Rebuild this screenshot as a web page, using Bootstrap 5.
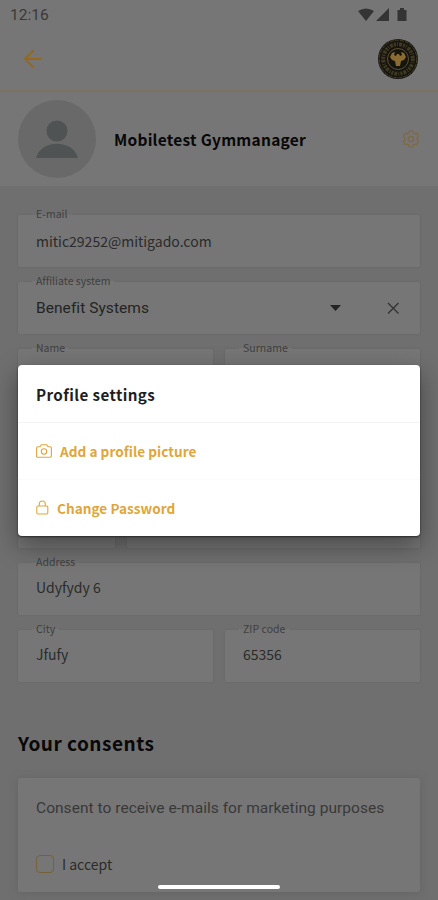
<!DOCTYPE html>
<html lang="en">
<head>
<meta charset="utf-8">
<meta name="viewport" content="width=device-width, initial-scale=1">
<title>Profile settings</title>
<link href="https://cdn.jsdelivr.net/npm/bootstrap@5.3.0/dist/css/bootstrap.min.css" rel="stylesheet">
<style>
body{background:#6f6f6f;color:#2b2b2b;font-family:"Noto Sans CJK SC",sans-serif;font-size:14px;line-height:20px}
.screen{width:438px;height:900px}
.robo{font-family:Roboto,sans-serif}
.surface{background:#767676}
.status{height:28px;padding:2px 31px 0 10px;font-size:15.5px;color:#393939}
.topbar{height:62px;padding:0 20px 0 23px}
.rule{height:2px;background:#7c715c}
.profile{height:94px;padding:0 18px}
.avatar{width:78px;height:78px;background:#696969}
.user-name{font-size:15.5px;font-weight:700;color:#080808;letter-spacing:.25px;padding-left:18px}
.form-area{padding:29px 18px 0}
.field{height:52px;background:#767676;border-radius:2px;padding:0 18px;box-shadow:0 0 2px #656565}
.field-label{left:14px;top:-10px;padding:0 4px;font-family:"Noto Sans CJK SC",sans-serif;font-size:10.5px;line-height:18px;color:#404040;letter-spacing:.03px}
.field-label::before{content:"";position:absolute;z-index:-1;inset:5px 0 4px;background:linear-gradient(#6f6f6f 50%,#767676 50%)}
.g-row{margin-bottom:15px}
.gap-field{gap:12px}
.short-field{width:97px}
.row-break{margin-bottom:28px}
.select-value{font-size:15.5px;color:#242424;letter-spacing:.06px}
.consent-title{font-size:19px;line-height:28px;font-weight:700;color:#080808;letter-spacing:.5px;margin:47px 0 21px}
.consent-box{height:114px;box-shadow:0 1px 8px #646464;border-radius:2px}
.consent-text{height:60px;font-size:15.5px;color:#393939;letter-spacing:.04px}
.inset-x{padding-left:18px;padding-right:18px}
.tick{width:18px;height:18px;border:1px solid #76623b;border-radius:4px}
.dialog-card{left:18px;top:365px;width:402px;height:171px;background:#fff;border-radius:4px;box-shadow:0 1px 2px #292929,0 9px 26px rgba(0,0,0,.4)}
.dialog-title{height:58px;font-size:15.2px;font-weight:700;color:#1e1e1e;border-bottom:1px solid #f3f3f3;letter-spacing:.4px}
.action{height:56px;color:#dfa63b;font-weight:700;font-size:13.6px;letter-spacing:.03px;text-decoration:none}
.action:hover{color:#b98220}
.action + .action{border-top:1px solid #fbfbfb}
.home-bar{left:158px;top:885px;width:122px;height:4px;background:#fff}
</style>
</head>
<body>
<div class="screen position-relative overflow-hidden">
<header class="surface">
  <div class="status robo d-flex align-items-center justify-content-between">
    <span>12:16</span>
    <svg width="50" height="16" viewBox="0 0 50 16" fill="#343434"><path d="M1 4Q9-1 17 4L9 14Z"/><path d="M19 14L32 1V14Z"/><path d="M40.500 3h2.500V1h4v2h2.500v11h-9Z"/></svg>
  </div>
  <div class="topbar d-flex align-items-center justify-content-between">
    <svg width="20" height="20" viewBox="0 0 20 20" fill="none" stroke="#936820" stroke-width="1.800"><path d="M10.500 1.500L2 10l8.500 8.500M2 10h16.500"/></svg>
    <svg width="40" height="40" viewBox="0 0 40 40"><circle cx="20" cy="20" r="20" fill="#15140e"/><g fill="none" stroke="#5b5031"><circle cx="20" cy="20" r="18.800" stroke-width=".7" stroke-dasharray="4 1"/><circle cx="20" cy="20" r="14.800" stroke-width="4" stroke-dasharray="2 1.100 1 1.200 3 1" opacity=".6"/><circle cx="20" cy="20" r="10.500" stroke-width="1"/></g><path d="M14 14l3-1-1 3 2 1 1-2h2l1 2 2-1-1-3 3 1 2 4-2 3-3 1-1 5h-4l-1-5-3-1-2-3Z" fill="#8c6b32"/></svg>
  </div>
</header>
<div class="rule"></div>
<section class="profile surface d-flex align-items-center">
  <div class="avatar rounded-circle flex-shrink-0 d-flex align-items-center justify-content-center"><svg width="42" height="40" viewBox="0 0 42 40" fill="#505353"><circle cx="21" cy="12" r="10.500"/><path d="M0 39C5 20 37 20 42 39Z"/></svg></div>
  <div class="user-name flex-grow-1">Mobiletest Gymmanager</div>
  <svg width="18" height="18" viewBox="0 0 18 18" fill="none" stroke="#80683f" stroke-width="1.200"><path d="M7.300 1h3.400l.6 2 1.500.9 2.100-.6 1.700 3L15.100 8v2l1.500 1.600-1.700 3-2.100-.5-1.500.9-.6 2H7.300l-.6-2-1.500-.9-2.100.5-1.700-3L2.900 10V8L1.400 6.300l1.700-3 2.100.6L6.700 3Z"/><circle cx="9" cy="9" r="2.700"/></svg>
</section>
<main class="form-area">
  <div class="field g-row position-relative d-flex align-items-center"><span class="field-label position-absolute z-1">E-mail</span>mitic29252@mitigado.com</div>
  <div class="field g-row position-relative d-flex align-items-center"><span class="field-label position-absolute z-1">Affiliate system</span><span class="select-value robo flex-grow-1">Benefit Systems</span>
    <svg width="72" height="14" viewBox="0 0 72 14"><path d="M0 4h11L5.500 10Z" fill="#242424"/><path d="M58 2l10.500 10.500M68.500 2L58 12.500" stroke="#343434" stroke-width="1.400"/></svg></div>
  <div class="g-row d-flex gap-field"><div class="field position-relative w-50"><span class="field-label position-absolute z-1">Name</span></div><div class="field position-relative w-50"><span class="field-label position-absolute z-1">Surname</span></div></div>
  <div class="field row-break"></div>
  <div class="g-row d-flex gap-field"><div class="field short-field"></div><div class="field flex-grow-1"></div></div>
  <div class="field g-row position-relative d-flex align-items-center pb-1"><span class="field-label position-absolute z-1">Address</span>Udyfydy 6</div>
  <div class="d-flex gap-field"><div class="field position-relative w-50 d-flex align-items-center pb-1"><span class="field-label position-absolute z-1">City</span>Jfufy</div><div class="field position-relative w-50 d-flex align-items-center pb-1"><span class="field-label position-absolute z-1">ZIP code</span>65356</div></div>
  <h2 class="consent-title">Your consents</h2>
  <section class="consent-box surface">
    <div class="consent-text inset-x robo d-flex align-items-center text-nowrap">Consent to receive e-mails for marketing purposes</div>
    <label class="inset-x d-flex align-items-center gap-2 pt-3"><span class="tick"></span><span>I accept</span></label>
  </section>
</main>
<div class="dialog-card position-absolute z-2" role="dialog">
  <div class="dialog-title inset-x d-flex align-items-center">Profile settings</div>
  <a class="action inset-x d-flex align-items-center" href="#"><svg class="me-2" width="16" height="14" viewBox="0 0 16 14" fill="none" stroke="currentColor" stroke-width="1.100"><path d="M1.800 2.700H4L5.300.8h5.400L12 2.700h2.200q1.200 0 1.200 1.200v8.200q0 1.200-1.200 1.200H1.800Q.6 13.300.6 12.100V3.900Q.6 2.700 1.800 2.700Z"/><circle cx="8" cy="7.500" r="2.700"/></svg>Add a profile picture</a>
  <a class="action inset-x d-flex align-items-center" href="#"><svg class="me-2" width="13" height="15" viewBox="0 0 13 15" fill="none" stroke="currentColor" stroke-width="1.100"><rect x=".8" y="6" width="11" height="8" rx="1.200"/><path d="M3.300 6V4q0-3 3-3t3 3v2"/></svg>Change Password</a>
</div>
<div class="home-bar position-absolute z-3 rounded-pill"></div>
</div>
<script src="https://cdn.jsdelivr.net/npm/bootstrap@5.3.0/dist/js/bootstrap.bundle.min.js"></script>
</body>
</html>
